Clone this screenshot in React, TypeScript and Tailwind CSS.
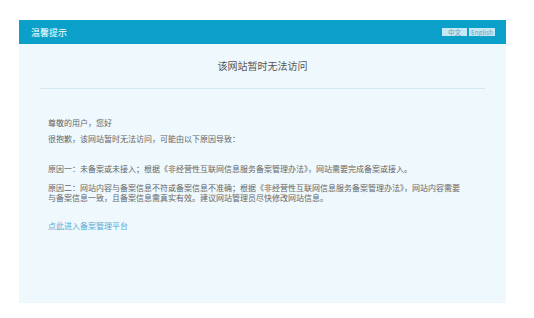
export default function App() {
  const font = { fontFamily: '"Noto Sans CJK SC", "Noto Sans", sans-serif' };
  return (
    <div className="w-[534px] h-[318px] bg-white pt-[20px] pl-[19px]" style={font}>
      <div className="w-[487px] h-[283px] bg-[#eef8fd] flex flex-col">
        <div className="h-[24px] bg-[#0aa0c9] flex items-center justify-between pl-[12px] pr-[11px]">
          <span className="text-[9px] text-white leading-none">温馨提示</span>
          <div className="flex gap-[2px]">
            <span className="w-[25px] h-[8px] bg-[#c6e7f4] text-[6.5px] leading-[8px] text-[#6f9fb4] text-center">中文</span>
            <span className="w-[26px] h-[8px] bg-[#c6e7f4] text-[6.5px] leading-[8px] text-[#6f9fb4] text-center">English</span>
          </div>
        </div>
        <div className="pt-[15px] h-[44px] text-center text-[10px] leading-[14px] text-[#555]">该网站暂时无法访问</div>
        <div className="mx-[21px] h-px bg-[#d3e8f0]"></div>
        <div className="pl-[29px] pr-[12px] pt-[29px] text-[8px] leading-[10px] text-[#666]">
          <p>尊敬的用户，您好</p>
          <p className="mt-[6px]">很抱歉，该网站暂时无法访问，可能由以下原因导致：</p>
          <p className="mt-[20px]">原因一：未备案或未接入；根据《非经营性互联网信息服务备案管理办法》，网站需要完成备案或接入。</p>
          <p className="mt-[9px]">原因二：网站内容与备案信息不符或备案信息不准确；根据《非经营性互联网信息服务备案管理办法》，网站内容需要<br />与备案信息一致，且备案信息需真实有效。建议网站管理员尽快修改网站信息。</p>
          <p className="mt-[18px] text-[#5ba8d6]">点此进入备案管理平台</p>
        </div>
      </div>
    </div>
  );
}
